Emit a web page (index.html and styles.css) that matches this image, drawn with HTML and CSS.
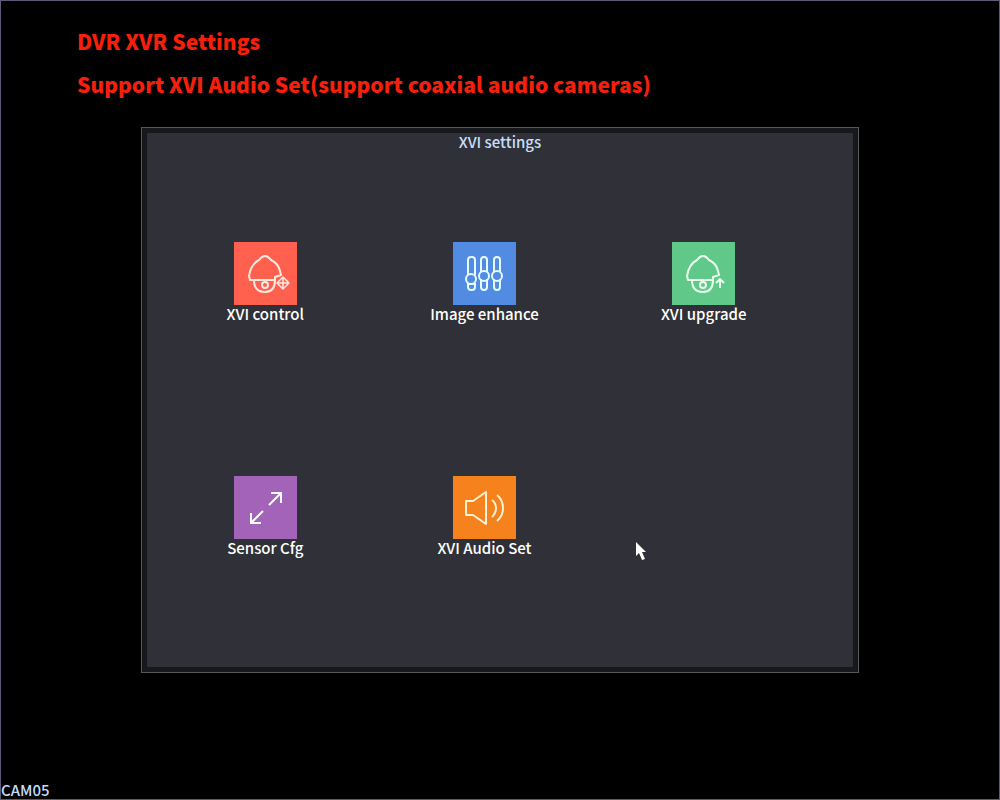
FILE: index.html
```html
<!DOCTYPE html>
<html lang="en">
<head>
    <meta charset="UTF-8">
    <meta name="viewport" content="width=device-width, initial-scale=1.0">
    <title>XVI settings</title>
    <link rel="stylesheet" href="styles.css">
</head>
<body>
    <header class="notes">
        <h1 class="note">DVR XVR Settings</h1>
        <p class="note">Support XVI Audio Set(support coaxial audio cameras)</p>
    </header>

    <main class="dialog">
        <div class="panel">
            <h2 class="panel-title">XVI settings</h2>
            <div class="tiles">
                <button class="tile">
                    <svg class="icon red" viewBox="0 0 63 63">
                        <path d="M16 38L15 34Q17 22 25 18Q28 14 31 14Q34 14 37 18Q44 21 46 29L47 33L41 35V38Z"/>
                        <path d="M20 38Q20 50 31 50Q41 50 41 38"/>
                        <circle cx="31" cy="43" r="3"/>
                        <path class="thin" d="M49 35V47M43 41H55M46 38L49 35L52 38M46 44L49 47L52 44M46 38L43 41L46 44M52 38L55 41L52 44"/>
                    </svg>
                    <span>XVI control</span>
                </button>
                <button class="tile">
                    <svg class="icon blue" viewBox="0 0 63 63">
                        <path d="M15 33V18Q15 15 18 15H19Q22 15 22 18V33M15 41V45Q15 48 18 48H19Q22 48 22 45V41M15 42H22"/>
                        <circle cx="18" cy="37" r="5"/>
                        <path d="M28 30V18Q28 15 31 15Q34 15 34 18V30M28 37V45Q28 48 31 48Q34 48 34 45V37"/>
                        <circle cx="31" cy="34" r="5"/>
                        <path d="M41 30V18Q41 15 44 15Q47 15 47 18V30M41 37V45Q41 48 44 48Q47 48 47 45V37"/>
                        <circle cx="44" cy="34" r="5"/>
                    </svg>
                    <span>Image enhance</span>
                </button>
                <button class="tile">
                    <svg class="icon green" viewBox="0 0 63 63">
                        <path d="M16 38L15 34Q17 22 25 18Q28 14 31 14Q34 14 37 18Q44 21 46 29L47 33L41 35V38Z"/>
                        <path d="M20 38Q20 50 31 50Q41 50 41 38"/>
                        <circle cx="31" cy="43" r="3"/>
                        <path d="M48 46V38M44 41L48 37L52 41"/>
                    </svg>
                    <span>XVI upgrade</span>
                </button>
                <button class="tile">
                    <svg class="icon purple" viewBox="0 0 63 63">
                        <path d="M35 29L47 17M37 17H47V27M29 35L17 47M17 37V47H27"/>
                    </svg>
                    <span>Sensor Cfg</span>
                </button>
                <button class="tile">
                    <svg class="icon orange" viewBox="0 0 63 63">
                        <path d="M13 25H20L33 16V48L20 39H13Z"/>
                        <path d="M39 24Q43 27 43 32Q43 37 39 41M44 19Q50 24 50 32Q50 40 44 45"/>
                    </svg>
                    <span>XVI Audio Set</span>
                </button>
            </div>
        </div>
        <svg class="cursor" viewBox="0 0 12 20">
            <path d="M1 1V15L4 12L7 19L10 18L7 11H11Z"/>
        </svg>
    </main>

    <footer class="camera">CAM05</footer>
</body>
</html>
```

FILE: styles.css
```css
*{
    margin: 0;
    padding: 0;
    box-sizing: border-box;
}
body{
    min-height: 100vh;
    display: flex;
    flex-direction: column;
    background-color: #000;
    border: 1px solid #5d5a76;
    color: #fff;
    font-family: "Noto Sans CJK SC", "Noto Sans", sans-serif;
    font-size: 15px;
    font-weight: 500;
    line-height: 18px;
}
.notes{
    padding: 19px 76px 21px;
}
.note{
    color: #f5200c;
    font-size: 21px;
    font-weight: 900;
    line-height: 43px;
}
.dialog{
    position: relative;
    width: 72%;
    margin: 0 auto;
    padding: 5px;
    background-color: #17181b;
    border: 1px solid #55585a;
}
.panel{
    background-color: #303138;
}
.panel-title{
    color: #c8def8;
    font-size: 15px;
    font-weight: 500;
    line-height: 18px;
    text-align: center;
}
.tiles{
    display: grid;
    grid-template-columns: repeat(3, 1fr);
    row-gap: 153px;
    padding: 91px 40px 110px 9px;
}
.tile{
    display: flex;
    flex-direction: column;
    align-items: center;
    background: none;
    border: none;
    color: #fff;
    font: inherit;
}
.icon{
    width: 63px;
    height: 63px;
    fill: none;
    stroke: #fff;
    stroke-width: 2;
    stroke-linejoin: round;
}
.thin{
    stroke-width: 1.5;
}
.red{
    background-color: #ff614e;
    stroke: #ffe9df;
}
.blue{
    background-color: #528be2;
    stroke: #e6fbff;
}
.green{
    background-color: #60c888;
    stroke: #e9ffed;
}
.purple{
    background-color: #a263b8;
    stroke-linejoin: miter;
}
.orange{
    background-color: #f5821c;
    stroke: #fff3d2;
}
.cursor{
    position: absolute;
    left: 493px;
    top: 413px;
    width: 12px;
    height: 20px;
    fill: #fff;
}
.camera{
    margin-top: auto;
    color: #c2dcff;
    line-height: 18px;
}
```
